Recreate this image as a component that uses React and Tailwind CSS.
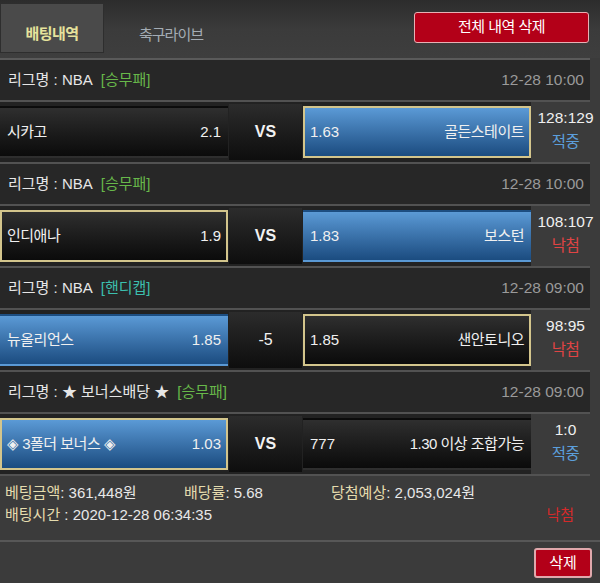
import React from "react";

const FONT = { fontFamily: '"Liberation Sans", "Noto Sans CJK KR", sans-serif' };

const bets = [
  {
    league: "NBA",
    type: "[승무패]",
    typeColor: "text-[#67b84a]",
    date: "12-28 10:00",
    home: { name: "시카고", odds: "2.1", win: false, pick: false },
    mid: "VS",
    away: { name: "골든스테이트", odds: "1.63", win: true, pick: true },
    score: "128:129",
    result: "적중",
  },
  {
    league: "NBA",
    type: "[승무패]",
    typeColor: "text-[#67b84a]",
    date: "12-28 10:00",
    home: { name: "인디애나", odds: "1.9", win: false, pick: true },
    mid: "VS",
    away: { name: "보스턴", odds: "1.83", win: true, pick: false },
    score: "108:107",
    result: "낙첨",
  },
  {
    league: "NBA",
    type: "[핸디캡]",
    typeColor: "text-[#3cbfae]",
    date: "12-28 09:00",
    home: { name: "뉴올리언스", odds: "1.85", win: true, pick: false },
    mid: "-5",
    away: { name: "샌안토니오", odds: "1.85", win: false, pick: true },
    score: "98:95",
    result: "낙첨",
  },
  {
    league: "★ 보너스배당 ★",
    type: "[승무패]",
    typeColor: "text-[#67b84a]",
    date: "12-28 09:00",
    home: { name: "◈ 3폴더 보너스 ◈", odds: "1.03", win: true, pick: true },
    mid: "VS",
    away: { name: "1.30 이상 조합가능", odds: "777", win: false, pick: false },
    score: "1:0",
    result: "적중",
  },
];

function Side({ side, right }) {
  const bg = side.win
    ? "bg-gradient-to-b from-[#5b9ad6] to-[#1b4c80]"
    : "bg-gradient-to-b from-[#2f2f2f] to-[#0b0b0b]";
  const border = side.pick ? "border-2 border-[#d3c58c]" : "border-2 border-transparent";
  return (
    <div
      className={`flex h-[52px] items-center justify-between px-[5px] text-[15px] text-[#f0f0f0] ${bg} ${border} ${
        right ? "w-[228px]" : "w-[228px]"
      }`}
    >
      {right ? (
        <>
          <span>{side.odds}</span>
          <span className="tracking-[-0.5px]">{side.name}</span>
        </>
      ) : (
        <>
          <span className="tracking-[-0.5px]">{side.name}</span>
          <span>{side.odds}</span>
        </>
      )}
    </div>
  );
}

function Bet({ bet }) {
  return (
    <div>
      <div className="flex h-[40px] w-[590px] items-center justify-between bg-[#272727] pl-[8px] pr-[6px] text-[15px]">
        <div className="flex items-center gap-[8px]">
          <span className="text-[#e6e6e6]">리그명 : {bet.league}</span>
          <span className={bet.typeColor}>{bet.type}</span>
        </div>
        <span className="text-[#9a9a9a] text-[15.5px]">{bet.date}</span>
      </div>
      <div className="h-[2px] w-[590px] bg-[#525252]" />
      <div className="flex h-[60px] w-[600px]">
        <div className="flex w-[531px] items-center bg-[#222222]">
          <Side side={bet.home} />
          <div className="ml-[1px] flex h-[56px] w-[73px] items-center justify-center bg-gradient-to-b from-[#2c2c2c] to-[#0e0e0e] text-[16px] font-bold text-[#f2f2f2]">
            {bet.mid === "VS" ? "VS" : <span className="font-normal">{bet.mid}</span>}
          </div>
          <div className="ml-[1px]">
            <Side side={bet.away} right />
          </div>
        </div>
        <div className="flex flex-1 flex-col items-center pt-[5px] text-[15.5px] leading-[22px]">
          <span className="text-[#f0f0f0]">{bet.score}</span>
          <span
            className={`mt-[2px] tracking-[-0.5px] ${
              bet.result === "적중" ? "text-[#5b9fdc]" : "text-[#e04444]"
            }`}
          >
            {bet.result}
          </span>
        </div>
      </div>
      <div className="h-[2px] w-[590px] bg-[#525252]" />
    </div>
  );
}

export default function App() {
  return (
    <div className="h-[583px] w-[600px] overflow-hidden bg-[#3b3b3b]" style={FONT}>
      <div className="flex h-[58px] items-start bg-gradient-to-b from-[#2c2c2c] via-[#3b3b3b] to-[#3e3e3e] pt-[3px]">
        <div className="flex h-[50px] w-[104px] items-end justify-center border border-[#2e2e2e] bg-[#4a4a4a] pb-[7px] text-[15px] font-bold tracking-[-0.5px] text-[#e6e39c]">
          배팅내역
        </div>
        <div className="flex h-[50px] w-[104px] items-end justify-center pb-[7px] pl-[30px] text-[15px] tracking-[-1px] text-[#a4acb4]">
          축구라이브
        </div>
        <div className="ml-auto mr-[11px] mt-[9px] flex h-[31px] w-[175px] items-center justify-center rounded-[3px] border border-[#e8b0b4] bg-[#b30018] text-[15px] tracking-[-0.5px] text-white">
          전체 내역 삭제
        </div>
      </div>
      <div className="h-[2px] w-[590px] bg-[#5a5a5a]" />
      {bets.map((b, i) => (
        <Bet key={i} bet={b} />
      ))}
      <div className="px-[5px] pt-[6px] text-[15px] leading-[22px]">
        <div className="flex">
          <div className="w-[179px]">
            <span className="text-[#e5dcae]">베팅금액</span>
            <span className="text-[#e8e8e8]">: 361,448원</span>
          </div>
          <div className="w-[147px]">
            <span className="text-[#e5dcae]">배당률</span>
            <span className="text-[#e8e8e8]">: 5.68</span>
          </div>
          <div>
            <span className="text-[#e5dcae]">당첨예상</span>
            <span className="text-[#e8e8e8]">: 2,053,024원</span>
          </div>
        </div>
        <div className="flex items-center justify-between pr-[21px]">
          <div>
            <span className="text-[#e5dcae]">배팅시간</span>
            <span className="text-[#e8e8e8]"> : 2020-12-28 06:34:35</span>
          </div>
          <span className="text-[#d42a2a]">낙첨</span>
        </div>
      </div>
      <div className="mt-[14px] h-[2px] w-full bg-[#575757]" />
      <div className="flex justify-end pr-[8px] pt-[6px]">
        <div className="flex h-[30px] w-[58px] items-center justify-center rounded-[3px] border-2 border-[#e0a8ac] bg-[#b30018] text-[15px] text-white">
          삭제
        </div>
      </div>
    </div>
  );
}
